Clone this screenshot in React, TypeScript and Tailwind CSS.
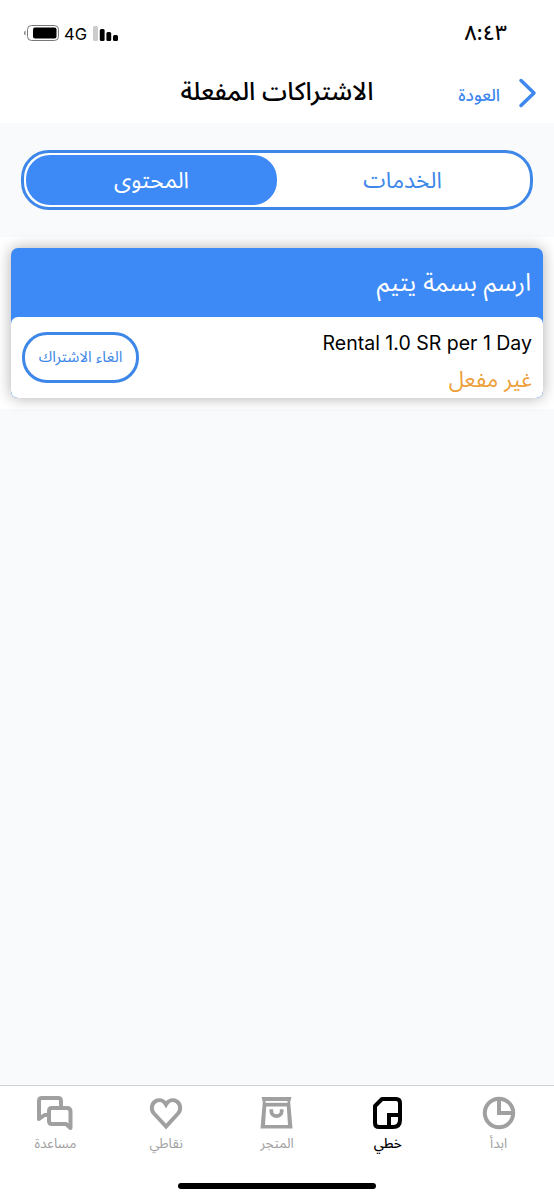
import React from 'react';

interface TabItemProps {
  label: string;
  active?: boolean;
  children: React.ReactNode;
}

const TabItem: React.FC<TabItemProps> = ({ label, active = false, children }) => {
  return (
    <button
      className={`flex flex-1 flex-col items-center pt-[7px] ${active ? 'font-medium text-black' : 'text-[#a0a0a0]'}`}
    >
      <svg width="40" height="40" viewBox="0 0 40 40" fill="none" stroke="currentColor" strokeWidth="4">
        {children}
      </svg>
      <span className="-mt-px whitespace-nowrap text-[13.5px] leading-[22px]">{label}</span>
    </button>
  );
};

const StatusBar: React.FC = () => {
  return (
    <div dir="ltr" className="flex h-[66px] items-center justify-between pl-[23px] pr-[47px]">
      <div className="flex items-center">
        <svg width="37" height="18" viewBox="0 0 37 18" fill="none">
          <path d="M2.5 6.5v5C.6 10.8.6 7.2 2.5 6.5Z" fill="#777" />
          <rect x="4.5" y="1.5" width="31" height="15" rx="4" stroke="#777" />
          <rect x="10" y="3.5" width="23.5" height="11" rx="2" fill="#000" />
        </svg>
        <span className="ml-[4px] mt-[2px] text-[16.5px] leading-none">4G</span>
        <svg className="ml-[6px] mt-px" width="26" height="18" viewBox="0 0 26 18">
          <rect x="0" y="1" width="5" height="15" rx="1.5" fill="#ccc" />
          <rect x="6.8" y="4" width="4.8" height="12" rx="1.5" />
          <rect x="13.4" y="7" width="4.8" height="9" rx="1.5" />
          <rect x="20" y="10" width="5" height="6" rx="1.5" />
        </svg>
      </div>
      <span className="pb-px text-[21px] font-medium leading-none">٨:٤٣</span>
    </div>
  );
};

const Header: React.FC = () => {
  return (
    <div className="grid h-[57px] grid-cols-[180px_194px_180px] items-center pb-[3px]">
      <button className="flex items-center gap-[18px] pr-[17px] text-[#3d87ee]">
        <svg width="19" height="30" viewBox="0 0 19 30" fill="none" stroke="currentColor" strokeWidth="3.5" strokeLinecap="round" strokeLinejoin="round">
          <path d="M3 2.5 16 15 3 27.5" />
        </svg>
        <span className="pt-[5px] text-[17px] font-medium leading-none">العودة</span>
      </button>
      <h1 className="flex justify-center whitespace-nowrap pb-[2px] text-[25.2px] font-medium leading-none">
        الاشتراكات المفعلة
      </h1>
    </div>
  );
};

const App: React.FC = () => {
  return (
    <div
      dir="rtl"
      className="flex h-[1200px] w-[554px] flex-col bg-[#f9fafc] font-[Inter,'Noto_Sans_Arabic','DejaVu_Sans',sans-serif] text-black"
    >
      <header className="bg-white">
        <StatusBar />
        <Header />
      </header>

      <main className="flex-1">
        <div className="px-[21px] pb-[27px] pt-[27px]">
          <div className="flex h-[60px] rounded-[28px] border-3 border-[#3d87e8] bg-white p-[2px] text-[22.6px]">
            <button className="flex-1 pb-px text-[#3d87e8]">الخدمات</button>
            <button className="flex-1 rounded-[24px] bg-[#3d8af7] pb-px text-white">المحتوى</button>
          </div>
        </div>

        <section className="bg-white px-[11px] pb-[11px] pt-[11px]">
          <div className="overflow-hidden rounded-[7px] bg-[#3d8af7] shadow-[0_0_15px_rgba(0,0,0,0.32)]">
            <div className="flex h-[69px] items-center px-[12px] text-[24.6px] text-white">ارسم بسمة يتيم</div>
            <div className="flex h-[81px] items-center justify-between rounded-[7px] bg-white px-[11px]">
              <div className="flex flex-col pt-[9px]">
                <span dir="ltr" className="text-[19.5px] leading-[30px]">Rental 1.0 SR per 1 Day</span>
                <span className="mt-[3px] text-[21.8px] leading-[36px] text-[#eda03a]">غير مفعل</span>
              </div>
              <button className="h-[51px] w-[117px] whitespace-nowrap rounded-[25px] border-3 border-[#3d87e8] text-[15.3px] text-[#3d87e8]">
                الغاء الاشتراك
              </button>
            </div>
          </div>
        </section>
      </main>

      <nav className="h-[115px] border-t border-[#cfd0d2] bg-white">
        <div className="flex h-[97px]">
          <TabItem label="ابدأ">
            <circle cx="20" cy="20" r="14.2" />
            <path d="M20 6v14h14" />
          </TabItem>
          <TabItem label="خطي" active>
            <path d="M14 6h14q4 0 4 4v17q0 7-7 7H11q-4 0-4-4V13Z" strokeLinejoin="round" />
            <path d="M21 34V22h11" />
          </TabItem>
          <TabItem label="المتجر">
            <path
              d="M4.5 4h30l-1.3 5 2.3 26.500h-32l2.300-26.500ZM9.200 13.500 8 32h23L29.800 13.500Z"
              fill="currentColor"
              fillRule="evenodd"
              stroke="none"
            />
            <path d="M8.500 8.900h22" stroke="#fff" strokeWidth="1.800" />
            <path d="M14.300 16.200v1.800a5.200 5.200 0 0 0 10.400 0v-1.800" strokeWidth="3.800" />
          </TabItem>
          <TabItem label="نقاطي">
            <path d="M20 33.5 8 20.5C4.500 16.500 5.500 10.500 9.500 8.200c3.500-2 8-1 10.500 3.300 2.500-4.300 7-5.300 10.500-3.300 4 2.300 5 8.300 1.500 12.300Z" />
          </TabItem>
          <TabItem label="مساعدة">
            <path d="M13 22H9.500L4 26V8q0-3 3-3h16q3 0 3 3v7" strokeLinejoin="round" />
            <path d="M17 15h15q3.500 0 3.500 3.500V35L31 31H17q-3 0-3-3V18q0-3 3-3Z" strokeLinejoin="round" />
          </TabItem>
        </div>
        <div className="mx-auto h-[6px] w-[198px] rounded-full bg-black" />
      </nav>
    </div>
  );
};

export default App;
